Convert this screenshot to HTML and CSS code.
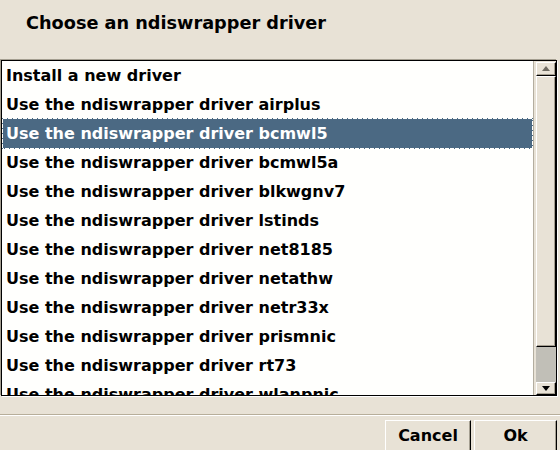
FILE: index.html
```html
<!DOCTYPE html>
<html lang="en">
<head>
	<meta charset="UTF-8">
	<meta name="viewport" content="width=device-width, initial-scale=1.0">
	<title>Choose an ndiswrapper driver</title>
	<link rel="stylesheet" href="styles.css">
</head>
<body>
	<div class="dialog">
		<div class="header">
			<h1 class="title">Choose an ndiswrapper driver</h1>
		</div>

		<div class="listbox">
			<ul class="list">
				<li class="row">Install a new driver</li>
				<li class="row">Use the ndiswrapper driver airplus</li>
				<li class="row selected">Use the ndiswrapper driver bcmwl5</li>
				<li class="row">Use the ndiswrapper driver bcmwl5a</li>
				<li class="row">Use the ndiswrapper driver blkwgnv7</li>
				<li class="row">Use the ndiswrapper driver lstinds</li>
				<li class="row">Use the ndiswrapper driver net8185</li>
				<li class="row">Use the ndiswrapper driver netathw</li>
				<li class="row">Use the ndiswrapper driver netr33x</li>
				<li class="row">Use the ndiswrapper driver prismnic</li>
				<li class="row">Use the ndiswrapper driver rt73</li>
				<li class="row">Use the ndiswrapper driver wlanpnic</li>
			</ul>
			<div class="scrollbar">
				<div class="stepper"><span class="arrow up"></span></div>
				<div class="trough"><div class="thumb"></div></div>
				<div class="stepper last"><span class="arrow down"></span></div>
			</div>
		</div>

		<div class="separator"></div>

		<div class="actions">
			<button class="btn cancel">Cancel</button>
			<button class="btn ok">Ok</button>
		</div>
	</div>
</body>
</html>
```

FILE: styles.css
```css
/* Page */
html, body {
	margin: 0;
	padding: 0;
}

body {
	width: 560px;
	height: 450px;
	overflow: hidden;
	background-color: #e8e2d6;
	font-family: "DejaVu Sans", sans-serif;
	font-weight: bold;
	color: #000;
}

.dialog {
	display: flex;
	flex-direction: column;
	width: 560px;
}

/* Title strip */
.header {
	height: 60px;
	box-sizing: border-box;
	padding: 13px 0 0 26px;
}

.title {
	margin: 0;
	font-size: 17.7px;
	line-height: 21px;
	font-weight: bold;
}

/* The list with its scrollbar */
.listbox {
	display: flex;
	box-sizing: border-box;
	width: 556px;
	height: 336px;
	margin-left: 1px;
	border: 1px solid #000;
	box-shadow: -1px -1px 0 #a49e90, 1px 1px 0 #fff;
}

.list {
	flex: 1;
	margin: 0;
	padding: 0;
	list-style: none;
	overflow: hidden;
	background-color: #fffffd;
}

.row {
	height: 29px;
	margin: 0 1px;
	padding-left: 3px;
	font-size: 16px;
	line-height: 29px;
	white-space: nowrap;
}

.row.selected {
	position: relative;
	background-color: #4b6983;
	color: #fff;
}

/* dotted focus line */
.row.selected::after {
	content: "";
	position: absolute;
	top: -1px;
	left: -1px;
	right: -1px;
	bottom: -1px;
	background:
		repeating-linear-gradient(90deg, #4b6983 0 1px, transparent 1px 5px) left top / 100% 1px no-repeat,
		repeating-linear-gradient(90deg, transparent 0 2px, #4b6983 2px 3px, transparent 3px 5px) left bottom / 100% 1px no-repeat,
		repeating-linear-gradient(180deg, #4b6983 0 1px, transparent 1px 5px) left top / 1px 100% no-repeat,
		repeating-linear-gradient(180deg, transparent 0 2px, #4b6983 2px 3px, transparent 3px 5px) right top / 1px 100% no-repeat;
}

.scrollbar {
	display: flex;
	flex-direction: column;
	width: 23px;
	box-sizing: border-box;
	padding: 1px 0 0 2px;
	border-left: 1px solid #b3ad9f;
	background-color: #e8e2d6;
}

.stepper {
	display: flex;
	align-items: center;
	justify-content: center;
	height: 14px;
	box-sizing: border-box;
	border: 1px solid;
	border-color: #fff #000 #000 #fff;
	box-shadow: inset -1px -1px 0 #a49e90;
	background-color: #e8e2d6;
}

.stepper.last {
	height: 13px;
}

.arrow {
	width: 0;
	height: 0;
	border-left: 4px solid transparent;
	border-right: 4px solid transparent;
}

.arrow.up {
	border-bottom: 5px solid #6f6b62;
	margin-top: -1px;
}

.arrow.down {
	border-top: 5px solid #000;
}

.trough {
	flex: 1;
	display: flex;
	flex-direction: column;
	background-color: #c1bfb7;
}

.thumb {
	height: 271px;
	box-sizing: border-box;
	border: 1px solid;
	border-color: #fff #000 #000 #fff;
	box-shadow: inset -1px -1px 0 #a49e90;
	background-color: #e8e2d6;
}

/* Bottom area */
.separator {
	height: 0;
	margin-top: 18px;
	border-top: 1px solid #b7ae9a;
	border-bottom: 1px solid #fff;
}

.actions {
	display: flex;
	justify-content: flex-end;
	gap: 3px;
	margin-top: 4px;
	padding-right: 3px;
}

.btn {
	height: 35px;
	box-sizing: border-box;
	padding: 5px 0 8px;
	border: 1px solid;
	border-color: #fff #000 #000 #fff;
	box-shadow: inset -1px -1px 0 #a49e90;
	background-color: #e8e2d6;
	font-family: "DejaVu Sans", sans-serif;
	font-size: 16px;
	font-weight: bold;
	line-height: 20px;
	color: #000;
}

.btn.cancel {
	width: 86px;
}

.btn.ok {
	width: 83px;
}
```
